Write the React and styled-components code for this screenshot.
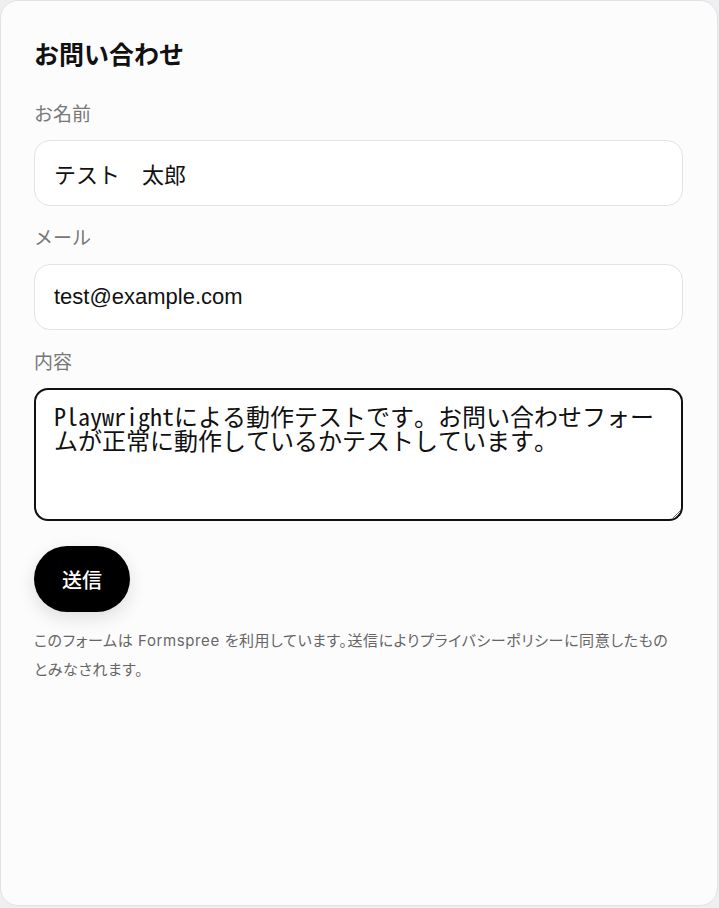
import React from "react";
import styled, { createGlobalStyle } from "styled-components";

const GlobalStyle = createGlobalStyle`
  html, body {
    margin: 0;
    padding: 0;
    background: #efeff1;
  }
  body {
    font-family: "Inter", "Noto Sans CJK JP", sans-serif;
  }
  * { box-sizing: border-box; }
`;

const Card = styled.div`
  width: 718px;
  height: 906px;
  background: #fcfcfd;
  border: 1px solid #e2e2e6;
  border-radius: 18px;
  padding: 36px 34px 0 33px;
`;

const Title = styled.h1`
  margin: 0 0 29px;
  font-size: 25px;
  font-weight: 700;
  color: #111;
  line-height: 36px;
`;

const Form = styled.form`
  display: flex;
  flex-direction: column;
`;

const Field = styled.label`
  display: flex;
  flex-direction: column;
  gap: 12px;
  margin-bottom: 20px;
`;

const Label = styled.span`
  font-size: 19px;
  line-height: 26px;
  color: #777;
`;

const Input = styled.input`
  height: 66px;
  width: 100%;
  padding: 0 19px;
  border: 1px solid #e3e3e6;
  border-radius: 16px;
  background: #fff;
  font-family: "Liberation Sans", "Noto Sans CJK JP", sans-serif;
  font-size: 22px;
  color: #111;
  outline: none;
`;

const TextArea = styled.textarea`
  height: 133px;
  width: 100%;
  padding: 14px 18px;
  border: 2px solid #111;
  border-radius: 14px;
  background: #fff;
  font-family: "Noto Sans Mono CJK JP", monospace;
  font-size: 24px;
  line-height: 24px;
  color: #111;
  outline: none;
  resize: vertical;
`;

const Submit = styled.button`
  align-self: flex-start;
  margin-top: 5px;
  height: 66px;
  padding: 0 28px;
  border: none;
  border-radius: 33px;
  background: #000;
  color: #fff;
  font-family: "Noto Sans CJK JP", sans-serif;
  font-size: 20px;
  font-weight: 500;
  box-shadow: 0 6px 18px rgba(0, 0, 0, 0.12);
  cursor: pointer;
`;

const Note = styled.p`
  margin: 14px 0 0;
  max-width: 642px;
  font-size: 15px;
  line-height: 29px;
  letter-spacing: 0.6px;
  color: #666;
  font-feature-settings: "palt";
`;

const App = () => {
  return (
    <>
      <GlobalStyle />
      <Card>
        <Title>お問い合わせ</Title>
        <Form onSubmit={(e) => e.preventDefault()}>
          <Field>
            <Label>お名前</Label>
            <Input defaultValue="テスト　太郎" />
          </Field>
          <Field>
            <Label>メール</Label>
            <Input type="email" defaultValue="test@example.com" />
          </Field>
          <Field>
            <Label>内容</Label>
            <TextArea defaultValue="Playwrightによる動作テストです。お問い合わせフォームが正常に動作しているかテストしています。" />
          </Field>
          <Submit type="submit">送信</Submit>
        </Form>
        <Note>
          このフォームは Formspree を利用しています。送信によりプライバシーポリシーに同意したものとみなされます。
        </Note>
      </Card>
    </>
  );
};

export default App;
